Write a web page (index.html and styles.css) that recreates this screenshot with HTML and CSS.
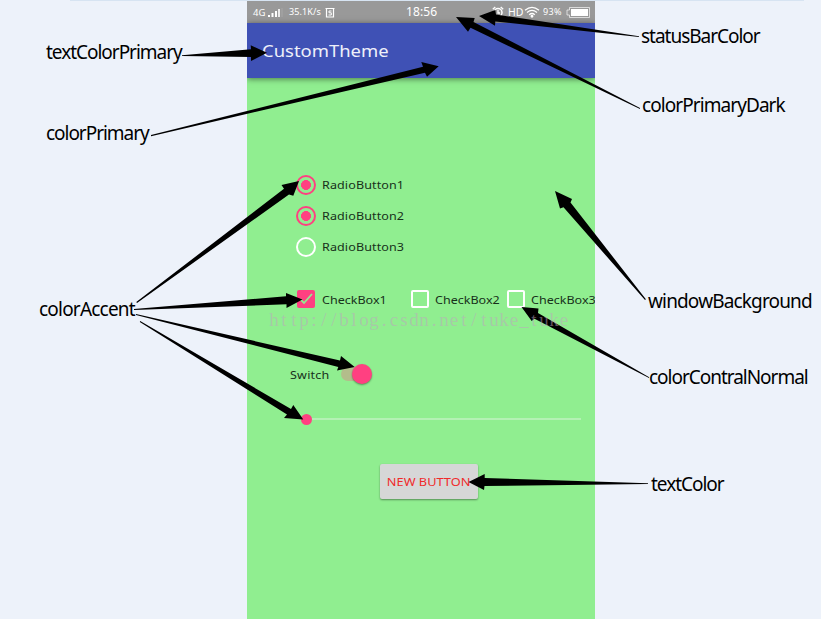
FILE: index.html
```html
<!DOCTYPE html>
<html lang="en">
<head>
<meta charset="utf-8">
<title>CustomTheme</title>
<link rel="stylesheet" href="styles.css">
</head>
<body>
<main class="canvas">
  <section class="phone">
    <header class="status">
      <span class="network">4G</span>
      <svg class="signal" width="16" height="10" viewBox="0 0 16 10"><path d="M1 7h2v2H1zM4.500 5h2v4h-2zM8 3h2v6H8z" fill="#fff"/><path d="M11 1h2v8h-2z" fill="#fff" opacity=".8"/><path d="M14.500 0h1v9h-1z" fill="#fff" opacity=".15"/></svg>
      <span class="speed">35.1K/s</span>
      <svg class="sim" width="10" height="11" viewBox="0 0 10 11" fill="none" stroke="#fff"><path d="M.5 1.500h9M1.500 2v8h7V2" stroke-width="1.200"/><path d="M6.500 4H4v1.800h2.300V8H3.500" stroke-width="1"/></svg>
      <span class="clock">18:56</span>
      <svg class="alarm" width="12" height="12" viewBox="0 0 12 12" fill="none" stroke="#fff"><circle cx="6" cy="6.500" r="4" stroke-width="1.500"/><path d="M.8 3.300 3.300 1M11.200 3.300 8.700 1M6 4v3h2M3 10l-1 1.500M9 10l1 1.500" stroke-width="1.300"/></svg>
      <span class="hd">HD</span>
      <svg class="wifi" width="16" height="12" viewBox="0 0 16 12" fill="none" stroke="#fff" stroke-width="1.300"><path d="M1 4.200Q8-1.500 15 4.200M3 6.500Q8 2.300 13 6.500M5.200 8.700Q8 6.200 10.800 8.700"/><circle cx="8" cy="10.200" r=".8" fill="#fff"/></svg>
      <span class="percent">93%</span>
      <svg class="battery" width="24" height="11" viewBox="0 0 24 11"><path d="M3.500.5h20v10h-20V8H1V3h2.500z" fill="none" stroke="#fff" opacity=".65"/><path d="M5 2h17v7H5z" fill="#fff"/></svg>
    </header>
    <div class="toolbar"><h1 class="title">CustomTheme</h1></div>
    <div class="content">
      <div class="radios">
        <div class="option"><i class="radio checked"></i><span>RadioButton1</span></div>
        <div class="option"><i class="radio checked"></i><span>RadioButton2</span></div>
        <div class="option"><i class="radio"></i><span>RadioButton3</span></div>
      </div>
      <div class="checks">
        <div class="check-item"><i class="box filled"><svg width="18" height="18" viewBox="0 0 18 18"><path d="m3 9 4 4 8-9" fill="none" stroke="#90ee90" stroke-width="1.800"/></svg></i><span>CheckBox1</span></div>
        <div class="check-item"><i class="box"></i><span>CheckBox2</span></div>
        <div class="check-item"><i class="box"></i><span>CheckBox3</span></div>
      </div>
      <div class="switch-row"><span>Switch</span><div class="track"><i class="thumb"></i></div></div>
      <div class="slider"><i class="knob"></i><i class="line"></i></div>
      <button class="button"><span>NEW BUTTON</span></button>
    </div>
  </section>
  <svg class="notes" width="821" height="619" viewBox="0 0 821 619">
    <g class="arrows">
      <path d="M182 55.200 251 49.300 250.700 45.300 267 52.800 251 61 251 57 182 56z"/>
      <path d="M151 135.100 423 66.700 421.300 62 438.700 66.300 427 76.700 425 72.700 151 136.200z"/>
      <path d="M639 36.300 496 14.500 495.300 10 479 16 495 25.700 495.300 21.500 639 36.900z"/>
      <path d="M640 108 473.500 22 474.700 18 456 17 468 31.700 470.500 27.700 640 109z"/>
      <path d="M136.300 302 284 188.800 281.500 185 299 181 293.300 195.700 289 194.500 137 303z"/>
      <path d="M134 309 286 296.300 286 293 302.500 299.500 286.500 308 286.500 304.300 134 309.900z"/>
      <path d="M136 314 340 360.500 341 356 354.700 367 337 370.500 338.300 367 136 315z"/>
      <path d="M140.200 321 291 409 293.300 405 303.300 419.500 284 418 287 414.500 139.800 322z"/>
      <path d="M645.900 299.200 570.500 202.500 572 199 555 191 560 208.500 563.500 207.300 645 300z"/>
      <path d="M649.200 377.200 538 313 538.500 308.500 521.500 307 531.700 321 534.500 318.700 649 378z"/>
      <path d="M648 483.300 484.700 478 484.700 474 468.500 482 484 490 484.500 486 648 484z"/>
    </g>
    <g class="labels">
      <text x="46" y="59" textLength="136">textColorPrimary</text>
      <text x="46" y="140" textLength="103">colorPrimary</text>
      <text x="39" y="316" textLength="96">colorAccent</text>
      <text x="641" y="43" textLength="119">statusBarColor</text>
      <text x="642" y="112" textLength="143">colorPrimaryDark</text>
      <text x="648" y="308" textLength="164">windowBackground</text>
      <text x="649" y="384" textLength="159">colorContralNormal</text>
      <text x="651" y="491" textLength="73">textColor</text>
    </g>
    <text class="watermark" y="326" x="274 284 294 304 314 324 334 344 354 364 374 384 394 404 414 424 434 444 454 464 474 484 494 504 514 524 534 544 554 564">http://blog.csdn.net/tuke_tuke</text>
  </svg>
</main>
</body>
</html>
```

FILE: styles.css
```css
* { box-sizing: border-box; }
body { margin: 0; font-family: "Noto Sans", sans-serif; }
i { display: block; font-style: normal; }
.canvas { position: relative; width: 821px; height: 619px; overflow: hidden; background: #edf2fa; }
.canvas::before { content: ""; position: absolute; left: 70px; top: 0; width: 734px; height: 1px; background: #d7e4f2; }
.phone { width: 348px; height: 618px; margin: 1px 0 0 247px; overflow: hidden; background: #90ee90; }
.status { display: flex; align-items: center; height: 22px; padding-left: 6px; background: #999; color: #fff; white-space: nowrap; line-height: 22px; }
.status svg { flex: none; }
.network { width: 14px; font-size: 9.5px; padding-top: 2px; }
.signal { margin-top: 2px; }
.speed { width: 33px; margin-left: 6px; font-size: 9px; letter-spacing: .1px; }
.sim { margin: 1px 0 0 3px; }
.clock { width: 34px; margin-left: 71px; font-size: 12px; letter-spacing: .1px; }
.alarm { margin-left: 52px; }
.hd { width: 16px; margin-left: 4px; font-size: 10.5px; }
.wifi { margin-left: 0; }
.percent { width: 21px; margin-left: 3px; font-size: 9px; letter-spacing: .3px; }
.battery { margin-left: 2px; }
.toolbar { position: relative; display: flex; align-items: center; height: 55px; padding-left: 15px; background: #3f51b5; box-shadow: 0 1px 6px rgba(0,0,0,.5); }
.title { margin: 0; font-size: 17px; font-weight: 400; color: #eef0fa; line-height: 24px; transform: scaleX(1.085); transform-origin: left; }
.content { display: flex; flex-direction: column; padding-top: 91px; color: #17301a; font-size: 11.5px; white-space: nowrap; }
.content span { transform: scaleX(1.09); transform-origin: left; }
.radios { padding-left: 49px; }
.option { display: flex; align-items: center; gap: 6px; height: 31px; letter-spacing: .1px; }
.radio { width: 20px; height: 20px; border: 2px solid #fff; border-radius: 50%; }
.radio.checked { border-color: #ff4081; background: radial-gradient(circle, #ff4081 4.700px, transparent 5.200px); }
.checks { display: grid; grid-template-columns: 113.500px 96px 100px; height: 30px; margin: 22px 0 0 50px; }
.check-item { display: flex; align-items: center; gap: 6.500px; }
.box { flex: none; width: 18px; height: 18px; border: 2px solid #fff; border-radius: 2px; }
.box.filled { border: 0; background: #ff4081; }
.box svg { display: block; }
.switch-row { display: flex; align-items: center; height: 24px; margin: 48px 0 0 43px; letter-spacing: .2px; }
.switch-row span { width: 51px; }
.track { display: flex; justify-content: flex-end; align-items: center; width: 30px; height: 14px; border-radius: 7px; background: #b3bd8b; }
.thumb { flex: none; width: 20px; height: 20px; margin-right: -1px; border-radius: 50%; background: #ff4081; box-shadow: 0 1px 2px rgba(0,0,0,.4); }
.slider { display: flex; align-items: center; height: 12px; margin: 27px 14px 0 54px; }
.knob { width: 11px; height: 11px; border-radius: 50%; background: #ff4081; }
.line { flex: 1; height: 2px; background: #b4f1b4; }
.button { display: flex; align-items: center; justify-content: center; width: 98px; height: 35px; margin: 39px 0 0 133px; padding: 0; border: 0; border-radius: 2px; background: #d6d7d7; box-shadow: 0 1px 2px rgba(0,0,0,.4); color: #f02a2a; font: 11.5px "Noto Sans", sans-serif; white-space: nowrap; }
.button span { transform: scaleX(1.11); transform-origin: center; }
.notes { position: absolute; left: 0; top: 0; }
.labels { font-size: 19px; letter-spacing: -.7px; fill: #000; }
.watermark { font: 19px "Liberation Serif", serif; text-anchor: middle; fill: rgba(190,165,190,.5); }
```
